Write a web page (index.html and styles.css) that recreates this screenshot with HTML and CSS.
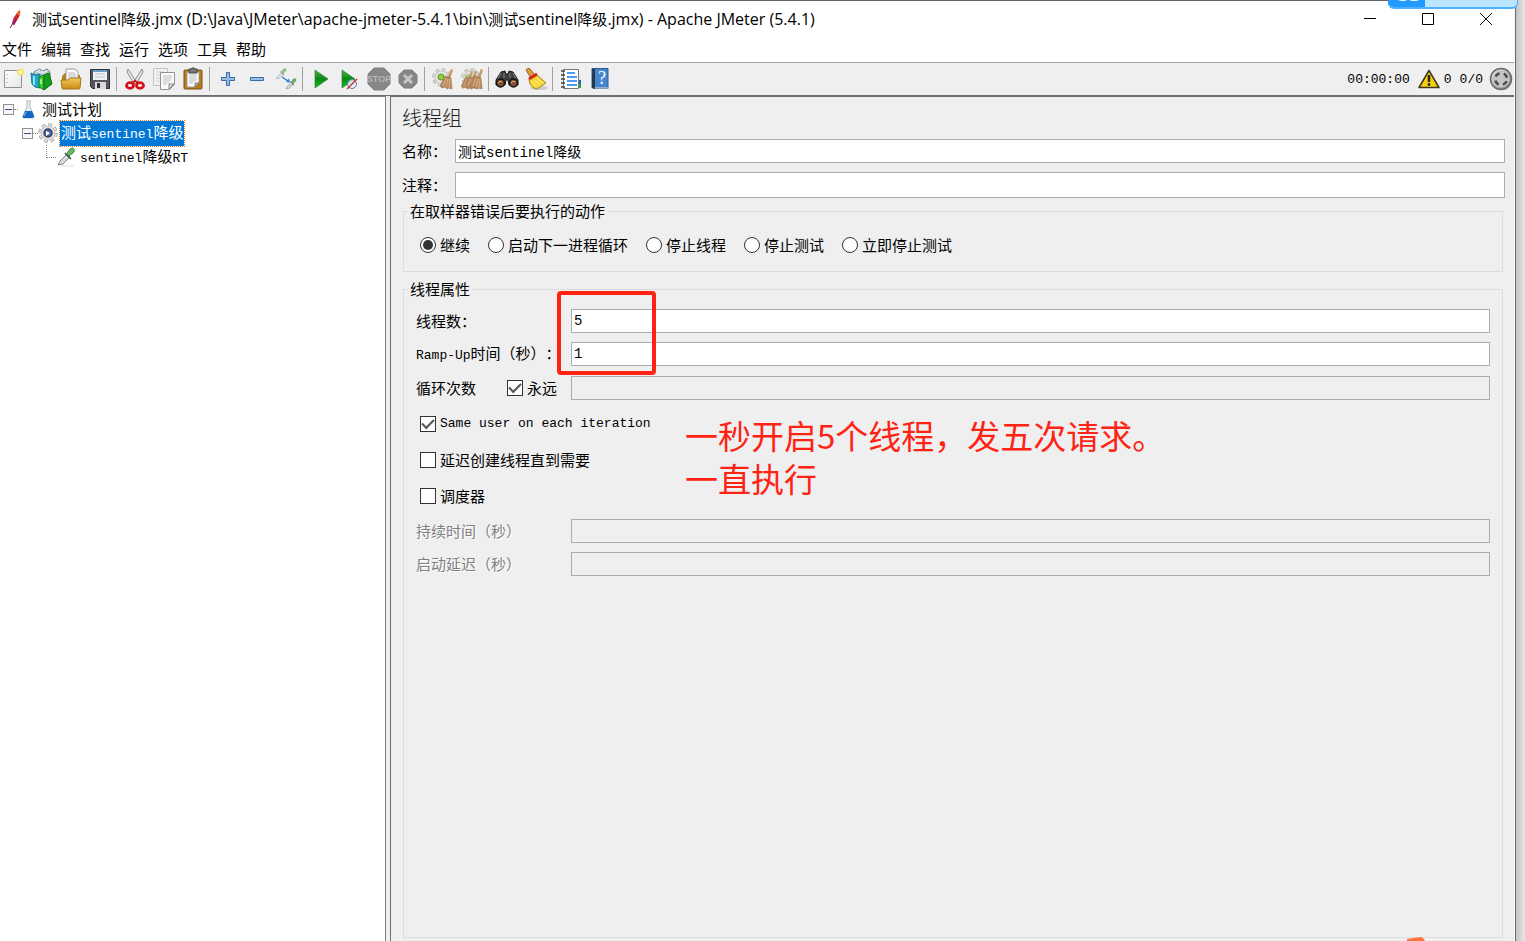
FILE: index.html
```
<!DOCTYPE html>
<html lang="zh-CN">
<head>
<meta charset="utf-8">
<title>Apache JMeter (5.4.1)</title>
<link rel="stylesheet" href="styles.css">
</head>
<body>
<svg class="defs" aria-hidden="true">
  <defs>
    <linearGradient id="gold" x1="0" y1="0" x2="0" y2="1"><stop offset="0" stop-color="#f3c95a"/><stop offset="1" stop-color="#c98b16"/></linearGradient>
    <linearGradient id="leaf" x1="0" y1="0" x2="0" y2="1"><stop offset="0" stop-color="#4fae4b"/><stop offset=".5" stop-color="#078a10"/><stop offset="1" stop-color="#12c51c"/></linearGradient>
    <linearGradient id="steel" x1="0" y1="0" x2="1" y2="1"><stop offset="0" stop-color="#f4f4f4"/><stop offset="1" stop-color="#777"/></linearGradient>
    <linearGradient id="page" x1="0" y1="0" x2="1" y2="1"><stop offset="0" stop-color="#fff"/><stop offset="1" stop-color="#e6e6e6"/></linearGradient>
    <symbol id="gear" viewBox="0 0 20 20">
      <circle cx="10" cy="10" r="8" fill="none" stroke="#a4a4a4" stroke-width="3.500" stroke-dasharray="3.600 2.680"/>
      <circle cx="10" cy="10" r="8" fill="none" stroke="#e2e2e2" stroke-width="2" stroke-dasharray="2.600 3.680" stroke-dashoffset="-.5"/>
      <circle cx="10" cy="10" r="7" fill="#e4e4e4" stroke="#b4b4b4" stroke-width=".7"/>
    </symbol>
    <symbol id="dropper" viewBox="0 0 20 20">
      <path d="M2 18l2-4 7-7 3 3-7 7z" fill="#d5dcdc" stroke="#7d8787"/>
      <path d="M9 6l6 6" stroke="#344" stroke-width="1.500"/>
      <path d="M11 6l3-4q3-2 4 0t-1 4l-4 3z" fill="#6cb562" stroke="#498d44"/>
    </symbol>
    <symbol id="broom" viewBox="0 0 14 22">
      <path d="M11 1l2 1-3 9-3-1z" fill="#c49a6a"/>
      <path d="M5 8l6 2 1 11-3-1-2 1-2-2-3 1-2-2z" fill="#b78a5f" stroke="#9a7048" stroke-width=".6"/>
      <path d="M6 10L3 18M8 11l-2 8M10 11l-1 9" stroke="#e0bd91" stroke-width=".8"/>
    </symbol>
  </defs>
</svg>
<div class="desktop">
<div class="window">
  <header class="titlebar">
    <svg class="feather" viewBox="0 0 12 20"><path d="M11 1q1 3-1 7l-5 8-2-1q1-8 8-14z" fill="#d22128"/><path d="M11 1q1 3-1 5l-3-1q2-3 4-4z" fill="#f06a28"/><path d="M5 10l-2 5 2 1 3-5z" fill="#a31c68"/><path d="M4 14l-3 5" stroke="#8b2860"/></svg>
    <h1 class="title"><span class="han">测试</span>sentinel<span class="han">降级</span>.jmx (D:\Java\JMeter\apache-jmeter-5.4.1\bin\<span class="han">测试</span>sentinel<span class="han">降级</span>.jmx) - Apache JMeter (5.4.1)</h1>
    <div class="controls">
      <button class="control" aria-label="最小化"><svg viewBox="0 0 14 14"><path d="M1 6.500h12" stroke="#000"/></svg></button>
      <button class="control" aria-label="最大化"><svg viewBox="0 0 14 14"><path d="M1.500 1.500h11v11h-11z" fill="none" stroke="#000"/></svg></button>
      <button class="control" aria-label="关闭"><svg viewBox="0 0 14 14"><path d="M1 1l12 12M13 1L1 13" stroke="#000"/></svg></button>
    </div>
  </header>
  <nav class="menu">
    <button>文件</button><button>编辑</button><button>查找</button><button>运行</button><button>选项</button><button>工具</button><button>帮助</button>
  </nav>
  <div class="toolbar">
    <button class="tool" aria-label="新建"><svg viewBox="0 0 24 24"><path d="M3.500 3.500h17v17h-17z" fill="url(#page)" stroke="#929292"/><path d="M6 7v1M6 11v1M6 15v1" stroke="#999"/><circle cx="19.500" cy="5" r="3.500" fill="#f6e56b"/><circle cx="19.500" cy="5" r="1.500" fill="#fffde0"/></svg></button>
    <button class="tool" aria-label="模板"><svg viewBox="0 0 24 24"><path d="M4 5l5-3 4 2 4-2 3 3v9H4z" fill="#b8cad0" stroke="#6b8792"/><path d="M6 5l4-2M9 6l4-2M12 6l5-2" stroke="#f8ffff"/><path d="M1 6l4 2 5-1v14l-5-1-3-3z" fill="#26a5cc" stroke="#147a9a"/><path d="M4 9v9" stroke="#91e3f5" stroke-width="2"/><path d="M9 10l5-2v15l-5-3z" fill="#35c835" stroke="#158817"/><path d="M14 8l5-2 3 11-8 6z" fill="#159e1b" stroke="#117314"/><path d="M11 12v5" stroke="#c4f8a3" stroke-width="1.500"/></svg></button>
    <button class="tool" aria-label="打开"><svg viewBox="0 0 24 24"><path d="M3 9l3-3h3l1 2h11v13H3z" fill="#b97e16"/><path d="M7 2h9l3 3v9H7z" fill="#fafafa" stroke="#999"/><path d="M9 6h7M9 8h8M9 10h8" stroke="#bbb"/><path d="M2 13h7l2-2h11l-1 10q0 1-1 1H4q-1 0-1-1z" fill="url(#gold)" stroke="#a9761a"/></svg></button>
    <button class="tool" aria-label="保存"><svg viewBox="0 0 24 24"><path d="M2.500 2.500h19v19h-17l-2-2z" fill="#53575d" stroke="#303236"/><path d="M5 3h14v10H5z" fill="#eef3f7"/><path d="M5 3h14v2H5z" fill="#6ba0c9"/><path d="M7 7h10M7 10h10" stroke="#b7c0c8"/><path d="M7 15h11v7H7z" fill="#d9d9d9"/><path d="M9 16h3v5H9z" fill="#303236"/></svg></button>
    <i class="sep"></i>
    <button class="tool" aria-label="剪切"><svg viewBox="0 0 24 24"><path d="M5 2l9 14-3 1L4 5zM19 2l-9 14 3 1 7-12z" fill="#e9e9e9" stroke="#8c8c8c"/><ellipse cx="7" cy="18.500" rx="3.500" ry="2.800" fill="none" stroke="#d4121b" stroke-width="2.800"/><ellipse cx="17" cy="18.500" rx="3.500" ry="2.800" fill="none" stroke="#d4121b" stroke-width="2.800"/><path d="M9 16l3-2 3 2" fill="none" stroke="#d4121b" stroke-width="2"/></svg></button>
    <button class="tool" aria-label="复制"><svg viewBox="0 0 24 24"><path d="M1.500 1.500h14v17h-14z" fill="#f2f2f2" stroke="#c2c2c2"/><path d="M4 5h8M4 8h5M4 11h4M4 14h4" stroke="#d1d1d1"/><path d="M8.500 5.500h14v12l-5 5h-9z" fill="#fafafa" stroke="#929292"/><path d="M22 17l-5 5v-5z" fill="#ddd" stroke="#888"/><path d="M11 9h9M11 11h9M11 13h8M11 15h7M11 17h4" stroke="#c1c1c1"/></svg></button>
    <button class="tool" aria-label="粘贴"><svg viewBox="0 0 24 24"><rect x="3" y="3" width="18" height="19" rx="1" fill="#bd7a19" stroke="#765017"/><path d="M6 5h12v11l-4 4H6z" fill="#fff" stroke="#999"/><path d="M18 16l-4 4v-4z" fill="#ccc" stroke="#777"/><path d="M8 8h8M8 10h7M8 12h8M8 14h7M8 16h4" stroke="#b9b9b9"/><path d="M8 2h2l1-1h2l1 1h2v4H8z" fill="#777a70" stroke="#44463f"/></svg></button>
    <i class="sep"></i>
    <button class="tool" aria-label="展开"><svg viewBox="0 0 24 24"><path d="M10.500 5.500h3v5h5v3h-5v5h-3v-5h-5v-3h5z" fill="#99bce4" stroke="#3a6cad"/></svg></button>
    <button class="tool" aria-label="折叠"><svg viewBox="0 0 24 24"><path d="M5.500 10.500h13v3h-13z" fill="#99bce4" stroke="#3a6cad"/></svg></button>
    <button class="tool" aria-label="切换"><svg viewBox="0 0 24 24"><use href="#dropper" x="1" y="1" width="12" height="12" opacity=".7"/><use href="#dropper" x="11" y="11" width="12" height="12"/><path d="M8 10l6 4" stroke="#2b7de0" stroke-width="1.500"/><path d="M12 15l4 .5-1-4z" fill="#2b7de0"/></svg></button>
    <i class="sep"></i>
    <button class="tool" aria-label="启动"><svg viewBox="0 0 24 24"><path d="M6 3l13 9L6 21z" fill="url(#leaf)" stroke="#35843a" stroke-width=".7"/></svg></button>
    <button class="tool" aria-label="无间隔启动"><svg viewBox="0 0 24 24"><path d="M4 3l13 9L4 21z" fill="url(#leaf)" stroke="#35843a" stroke-width=".7"/><circle cx="14" cy="17" r="4.500" fill="#e4edf8" fill-opacity=".8" stroke="#4a83c5"/><path d="M9 22L19 12" stroke="#db2d28" stroke-width="1.500"/></svg></button>
    <button class="tool" aria-label="停止" disabled><svg viewBox="0 0 24 24"><path d="M7 1h10l6 6v10l-6 6H7l-6-6V7z" fill="#878787" stroke="#808080"/><text x="12" y="15" class="stop-text">STOP</text></svg></button>
    <button class="tool" aria-label="关闭测试" disabled><svg viewBox="0 0 24 24"><path d="M8 3h8l5 5v8l-5 5H8l-5-5V8z" fill="#868686" stroke="#808080"/><path d="M8 8l8 8M16 8l-8 8" stroke="#c6c6c6" stroke-width="3"/></svg></button>
    <i class="sep"></i>
    <button class="tool" aria-label="清除"><svg viewBox="0 0 24 24"><use href="#gear" x="1" y="1" width="19" height="19"/><circle cx="10" cy="10" r="3" fill="#8fd03c" stroke="#5c9828"/><use href="#broom" x="9" y="1" width="14" height="22"/></svg></button>
    <button class="tool" aria-label="清除全部"><svg viewBox="0 0 24 24"><use href="#gear" x="1" y="1" width="19" height="19"/><circle cx="8" cy="10" r="3" fill="#a9cd7b"/><use href="#broom" x="1" y="3" width="13" height="20"/><use href="#broom" x="5" y="2" width="13" height="21"/><use href="#broom" x="10" y="1" width="14" height="22"/></svg></button>
    <i class="sep"></i>
    <button class="tool" aria-label="搜索"><svg viewBox="0 0 24 24"><path d="M1 13l5-8 4-1 1 3h2l1-3 4 1 5 8v5H14l-1-5h-2l-1 5H1z" fill="#3b3c3d" stroke="#191a1a"/><path d="M6 6l-3 6M18 6l3 6M9 6v5M15 6v5" stroke="#84898c"/><circle cx="5.500" cy="16" r="4" fill="#815034" stroke="#141414" stroke-width="1.500"/><circle cx="18.500" cy="16" r="4" fill="#815034" stroke="#141414" stroke-width="1.500"/><path d="M3 16q2-3 4-1M16 16q2-3 4-1" fill="none" stroke="#f3b17f"/></svg></button>
    <button class="tool" aria-label="重置搜索"><svg viewBox="0 0 24 24"><ellipse cx="15" cy="21" rx="9" ry="2" fill="#ccc"/><path d="M2 3q2-3 4-1l5 6-4 3z" fill="#df9d3c" stroke="#93601e"/><path d="M13 8l9 8-9 6q-8-2-8-10z" fill="#f5d632" stroke="#a98717"/><path d="M8 14l4 6M11 13l5 6M13 11l6 6" stroke="#fff291"/><path d="M5 12l8-5" stroke="#cf2a1b" stroke-width="3"/></svg></button>
    <i class="sep"></i>
    <button class="tool" aria-label="函数助手"><svg viewBox="0 0 24 24"><path d="M4.500 2.500h15v19h-15z" fill="#fff" stroke="#777"/><path d="M8 6h8M8 10h10M8 14h10M8 18h10" stroke="#1678e6" stroke-width="1.500"/><path d="M2 4h4M2 8h4M2 12h4M2 16h4M2 20h4" stroke="#444" stroke-width="1.500"/><path d="M20 9h2v4h-2z" fill="#dce7f9"/><path d="M20 13h2v4h-2z" fill="#1d65c9"/><path d="M20 17h2v4h-2z" fill="#25a836"/></svg></button>
    <button class="tool" aria-label="帮助"><svg viewBox="0 0 24 24"><path d="M4 1.500h16v20H5l-1-1z" fill="#4686ce" stroke="#2a5891"/><path d="M4 2h3v19H4z" fill="#26394e"/><path d="M7 21h13" stroke="#ddd"/><text x="14" y="17" class="help-text">?</text></svg></button>
    <div class="status">
      <span>00:00:00</span>
      <svg class="warn" viewBox="0 0 22 20"><path d="M11 1.500L21 18.500H1z" fill="#f6cd13" stroke="#3d3820" stroke-width="1.500" stroke-linejoin="round"/><path d="M11 6v7" stroke="#292716" stroke-width="2.500"/><circle cx="11" cy="15.500" r="1.400" fill="#292716"/></svg>
      <span>0</span><span>0/0</span>
      <svg class="remote" viewBox="0 0 24 24"><circle cx="12" cy="12" r="10.500" fill="url(#steel)" stroke="#696969" stroke-width="1.500"/><circle cx="12" cy="12" r="8.500" fill="#c4c4c4"/><circle cx="12" cy="12" r="6" fill="none" stroke="#494949" stroke-width="2.500" stroke-dasharray="5 4.420" stroke-dashoffset="-2.200"/></svg>
    </div>
  </div>
  <main class="split">
    <aside class="tree">
      <div class="node"><button class="expander" aria-label="折叠"></button><i class="dots short"></i><svg class="node-icon" viewBox="0 0 20 20"><path d="M8 2h5M9 2v6L5 17q-1 2 2 2h8q2 0 1-2l-4-9V2" fill="#e5edf3" stroke="#aebbc3"/><path d="M7 12h7l2 5q0 2-2 2H6q-2 0-1-2z" fill="#1266bd"/><path d="M8 13l-2 4" stroke="#8cc5f5"/></svg><span>测试计划</span></div>
      <div class="node level-two"><button class="expander" aria-label="折叠"></button><i class="dots"></i><svg class="node-icon" viewBox="0 0 20 20"><use href="#gear" width="20" height="20"/><circle cx="10" cy="10" r="4" fill="#4d6ba0" stroke="#2d3d63" stroke-width="1.500"/><path d="M8 8l4 2-4 3z" fill="#fff"/></svg><span class="selected">测试<span class="latin">sentinel</span>降级</span></div>
      <div class="node level-three"><i class="dots elbow"></i><svg class="node-icon" viewBox="0 0 20 20"><path d="M5 19h13" stroke="#ddd"/><use href="#dropper" width="20" height="20"/></svg><span><span class="latin">sentinel</span>降级<span class="latin">RT</span></span></div>
    </aside>
    <section class="panel">
      <h2 class="heading">线程组</h2>
      <div class="field"><label for="name">名称：</label><input class="text" id="name" value="测试sentinel降级"></div>
      <div class="field"><label for="comment">注释：</label><input class="text tall" id="comment"></div>
      <fieldset class="group">
        <legend>在取样器错误后要执行的动作</legend>
        <div class="actions">
          <label class="choice"><input type="radio" name="action" checked>继续</label>
          <label class="choice"><input type="radio" name="action">启动下一进程循环</label>
          <label class="choice"><input type="radio" name="action">停止线程</label>
          <label class="choice"><input type="radio" name="action">停止测试</label>
          <label class="choice"><input type="radio" name="action">立即停止测试</label>
        </div>
      </fieldset>
      <fieldset class="group properties">
        <legend>线程属性</legend>
        <div class="marked">
          <div class="property"><label for="threads">线程数：</label><input class="text" id="threads" value="5"></div>
          <div class="property"><label for="ramp"><span class="latin">Ramp-Up</span>时间（秒）：</label><input class="text" id="ramp" value="1"></div>
          <div class="marker"></div>
        </div>
        <div class="property"><label for="loops">循环次数</label><label class="choice forever"><input type="checkbox" checked>永远</label><input class="text" id="loops" disabled></div>
        <div class="options">
          <label class="choice"><input type="checkbox" checked><span class="latin">Same user on each iteration</span></label>
          <label class="choice"><input type="checkbox">延迟创建线程直到需要</label>
          <label class="choice"><input type="checkbox">调度器</label>
          <p class="note">一秒开启5个线程，发五次请求。<br>一直执行</p>
        </div>
        <div class="property off"><label for="duration">持续时间（秒）</label><input class="text" id="duration" disabled></div>
        <div class="property off"><label for="delay">启动延迟（秒）</label><input class="text" id="delay" disabled></div>
      </fieldset>
    </section>
  </main>
</div>
<div class="edge"></div>
<div class="floating"><svg viewBox="0 0 37 8"><path d="M10 0h9q-1 1-4 1t-5-1zM22 0h9q-1 1-5 1t-4-1z" fill="#fff"/></svg></div>
<svg class="corner" viewBox="0 0 18 4"><path d="M0 2l14-2 2 1 2 3H0z" fill="#ff7040"/></svg>
</div>
</body>
</html>
```
FILE: styles.css
```
* { box-sizing: border-box; }
body { margin: 0; color: #000; font: 15px/20px "Noto Sans CJK SC", sans-serif; text-spacing-trim: space-all; }
button { padding: 0; border: 0; background: none; font: inherit; color: inherit; }
svg { display: block; }
.defs { position: absolute; width: 0; height: 0; }
.desktop { position: relative; display: flex; height: 100vh; overflow: hidden; }
.window { flex: 1; min-width: 0; display: flex; flex-direction: column; background: #efefef; border-top: 1px solid #666; }
.edge { width: 10px; border: solid #6c6e70; border-width: 0 0 0 1px; background: linear-gradient(90deg, #c2c2c2, #e9e9e9); box-shadow: -1px 0 #f8f8f8; }
.titlebar { display: flex; align-items: center; height: 36px; padding-left: 9px; background: #fff; }
.feather { width: 12px; height: 20px; margin-right: 11px; }
.title { flex: 1; margin: 0; font: 400 16px/20px "Open Sans", "Noto Sans CJK SC", sans-serif; white-space: nowrap; }
.han { font-size: 15px; }
.controls { display: flex; }
.control { display: grid; place-items: center; width: 58px; height: 36px; }
.control svg { width: 14px; height: 14px; }
.menu { display: flex; gap: 9px; height: 26px; padding: 2px 2px 4px; background: #fff; border-bottom: 1px solid #a0a0a0; }
.toolbar { display: flex; align-items: center; height: 33px; margin-left: -2px; border-bottom: 1px solid #6c6e70; }
.tool { display: grid; place-items: center; width: 29px; height: 32px; }
.tool svg { width: 24px; height: 24px; }
.sep { width: 2px; height: 24px; margin: 0 2px; background: #a0a0a0; border-right: 1px solid #efefef; }
.stop-text { font: 700 9px "Liberation Sans", sans-serif; fill: #b5b5b5; text-anchor: middle; }
.help-text { font: 18px "Liberation Serif", serif; fill: #fff; text-anchor: middle; }
.status { display: flex; align-items: center; gap: 8px; margin-left: auto; padding-right: 2px; font: 13px/18px "Liberation Mono", monospace; }
.status span { padding-top: 2px; }
.warn { width: 22px; height: 20px; margin-right: -4px; }
.remote { width: 24px; height: 24px; margin-left: -2px; }
.latin { font-family: "Liberation Mono", monospace; font-size: 13px; }
.split { flex: 1; min-height: 0; display: grid; grid-template-columns: 386px 1fr; gap: 4px; }
.tree { background: #fff; border: solid #7b7d80; border-width: 1px 1px 0 0; }
.node { display: flex; align-items: center; height: 24px; padding-left: 3px; white-space: nowrap; }
.node span { line-height: 22px; }
.node-icon { width: 20px; height: 20px; margin-right: 4px; }
.level-two { padding-left: 22px; }
.level-two .node-icon { margin-right: 2px; }
.level-three { padding-left: 46px; }
.expander { width: 11px; height: 11px; border: 1px solid #919191; background: linear-gradient(#34508c, #34508c) center / 7px 1px no-repeat #f6f6f6; }
.dots { width: 5px; border-top: 1px dotted #888; }
.dots.short { width: 4px; }
.elbow { width: 10px; height: 13px; margin-top: -12px; border: dotted #888; border-width: 0 0 1px 1px; }
.selected { padding: 0 1px; background: #0078d7; color: #fff; outline: 1px dotted #d87828; }
.panel { display: flex; flex-direction: column; min-width: 0; padding: 10px 10px 3px 11px; border: solid #6c6e70; border-width: 1px 0 0 1px; }
.heading { margin: 0 0 10px; font: 300 20px/22px "Noto Sans CJK SC", sans-serif; color: #222; }
.field { display: flex; align-items: center; margin-bottom: 9px; }
.field label { width: 53px; }
.text { flex: 1; min-width: 0; height: 24px; padding: 0 2px; border: 1px solid #abadb3; background: #fff; font: 14px "Liberation Mono", "Noto Sans CJK SC", monospace; color: #000; }
.text:disabled { background: #efefef; }
.tall { height: 26px; }
.group { min-width: 0; margin: -6px 2px 0 1px; padding: 0 12px; border: 1px solid #dcdcdc; }
.group legend { height: 20px; padding: 0 2px; margin-left: -8px; }
.actions { display: flex; gap: 18px; padding: 14px 4px 16px; }
.choice { display: flex; align-items: center; gap: 4px; white-space: nowrap; }
.choice input { appearance: none; display: grid; place-items: center; width: 16px; height: 16px; margin: 0; border: 1px solid #333; background: #fff; }
.choice input[type="radio"] { border-radius: 50%; }
.choice input[type="radio"]:checked::before { content: ""; width: 10px; height: 10px; border-radius: 50%; background: #333; }
.choice input[type="checkbox"]:checked::before { content: ""; width: 10px; height: 5px; margin-bottom: 3px; border: solid #555; border-width: 0 0 2px 2px; transform: rotate(-45deg); }
.properties { flex: 1; margin-top: 7px; padding-top: 10px; }
.marked { position: relative; }
.marker { position: absolute; left: 141px; top: -18px; width: 99px; height: 84px; border: 4px solid #ff2314; border-radius: 4px; }
.property { display: flex; align-items: center; height: 24px; margin-bottom: 9px; white-space: nowrap; }
.property > label:first-child { width: 155px; }
.property > label:nth-child(2) { width: 64px; }
.property:has(.forever) { margin-top: 10px; }
.property:has(.forever) > label:first-child { width: 91px; }
.off { color: #808080; text-shadow: 1px 1px #fff; }
.options { position: relative; display: flex; flex-direction: column; gap: 16px; margin: 14px 4px 13px; }
.note { position: absolute; left: 265px; top: 0; margin: 0; font-size: 33px; line-height: 43px; color: #ff2314; white-space: nowrap; }
.floating { position: absolute; right: 7px; top: 0; width: 130px; height: 9px; border: solid #4bb2ff; border-width: 0 1px 2px 0; border-radius: 0 0 6px 6px; background: #bce6ff; overflow: hidden; }
.floating svg { width: 37px; height: 8px; background: #219bff; }
.corner { position: absolute; right: 100px; bottom: 0; width: 18px; height: 4px; }
```
